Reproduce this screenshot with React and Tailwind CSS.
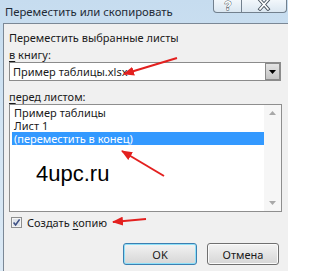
export default function App() {
  const font = { fontFamily: '"Noto Sans", "Open Sans", sans-serif' };
  return (
    <div
      className="relative w-[288px] h-[271px] overflow-hidden flex flex-col bg-gradient-to-b from-[#c6dcef] via-[#d3e5f4] to-[#dbe9f5] text-[#1a1a1a]"
      style={font}
    >
      {/* Title bar */}
      <div className="h-[23px] shrink-0 flex items-start">
        <div className="pl-[5px] pt-[4px] text-[11.3px] leading-[15px] text-[#1e2a36] whitespace-nowrap">
          Переместить или скопировать
        </div>
        <div className="ml-auto mr-[1px] flex h-[13px]">
          <div className="w-[29px] h-full border border-t-0 border-[#72808e] rounded-bl-[4px] bg-gradient-to-b from-[#f2f7fb] to-[#dbe7f1] flex items-start justify-center overflow-hidden">
            <svg width="12" height="12" viewBox="0 0 12 12">
              <text
                x="6"
                y="10"
                textAnchor="middle"
                fontSize="12"
                fontWeight="700"
                fontFamily="Liberation Sans, sans-serif"
                fill="#ffffff"
                stroke="#4a5560"
                strokeWidth="0.9"
                paintOrder="stroke"
              >
                ?
              </text>
            </svg>
          </div>
          <div className="w-[45px] h-full border border-t-0 border-l-0 border-[#72808e] rounded-br-[4px] bg-gradient-to-b from-[#f2f7fb] to-[#dbe7f1] flex items-start justify-center overflow-hidden">
            <svg width="14" height="12" viewBox="0 0 14 12" className="-mt-[1px]">
              <path d="M3 1 L11 10 M11 1 L3 10" stroke="#4a5560" strokeWidth="3.4" strokeLinecap="square" />
              <path d="M3 1 L11 10 M11 1 L3 10" stroke="#ffffff" strokeWidth="1.6" strokeLinecap="square" />
            </svg>
          </div>
        </div>
      </div>

      {/* Client area */}
      <div className="flex-1 ml-[3px] border-l border-t border-[#7b8896] bg-[#f0f0f0] pl-[5px] flex flex-col text-[11px] leading-[15px]">
        <div className="pt-[6px] whitespace-nowrap">Переместить выбранные листы</div>
        <div className="mt-[2px] whitespace-nowrap">
          <u className="underline-offset-2">в</u> книгу:
        </div>

        {/* Combobox */}
        <div className="w-[272px] h-[19px] border border-[#8b8b8b] bg-white flex items-center">
          <div className="flex-1 pl-[3px] whitespace-nowrap">Пример таблицы.xlsx</div>
          <div className="w-[15px] h-[17px] border border-[#8a8a8a] bg-gradient-to-b from-[#e4e4e4] to-[#c4c4c4] flex items-center justify-center">
            <svg width="7" height="4" viewBox="0 0 7 4">
              <path d="M0 0 L7 0 L3.5 4 Z" fill="#000" />
            </svg>
          </div>
        </div>

        <div className="mt-[8px] whitespace-nowrap">
          <u className="underline-offset-2">п</u>еред листом:
        </div>

        {/* Listbox */}
        <div className="relative w-[273px] h-[108px] border border-[#8e8e8e] bg-white flex">
          <div className="flex-1 pt-[1px] pl-[2px] flex flex-col">
            <div className="h-[13px] leading-[13px] pl-[2px] whitespace-nowrap">Пример таблицы</div>
            <div className="h-[13px] leading-[13px] pl-[2px] whitespace-nowrap">Лист 1</div>
            <div className="h-[13px] leading-[13px] pl-[2px] whitespace-nowrap bg-[#3399ff] text-white">
              (переместить в конец)
            </div>
          </div>
          <div className="w-[17px] bg-[#f6f6f6] flex flex-col justify-between items-center py-[6px]">
            <svg width="7" height="4" viewBox="0 0 7 4">
              <path d="M0 4 L7 4 L3.5 0 Z" fill="#a8a8a8" />
            </svg>
            <svg width="7" height="4" viewBox="0 0 7 4">
              <path d="M0 0 L7 0 L3.5 4 Z" fill="#a8a8a8" />
            </svg>
          </div>
          <div
            className="absolute left-[26px] top-[56px] text-[22px] leading-[26px] text-black whitespace-nowrap"
            style={{ fontFamily: '"Liberation Sans", Arial, sans-serif' }}
          >
            4upc.ru
          </div>
        </div>

        {/* Checkbox */}
        <div className="mt-[3px] h-[14px] flex items-center">
          <svg width="11" height="11" viewBox="0 0 11 11" className="ml-[2px]">
            <rect x="0.5" y="0.5" width="10" height="10" fill="#f4f4f4" stroke="#8e8f8f" />
            <rect x="2" y="2" width="7" height="7" fill="#dfe4ea" />
            <path d="M2.6 5.6 L4.6 8 L8.6 2.4" fill="none" stroke="#3d4f83" strokeWidth="1.6" />
          </svg>
          <span className="ml-[5px] whitespace-nowrap">
            Создать <u className="underline-offset-2">к</u>опию
          </span>
        </div>

        {/* Buttons */}
        <div className="mt-[14px] w-[270px] flex justify-end gap-[10px]">
          <div className="w-[74px] h-[22px] rounded-[3px] border border-[#3c7fb1] bg-gradient-to-b from-[#f3f3f3] to-[#d6d6d6] shadow-[inset_0_0_0_1px_#8fe0f8] flex items-center justify-center">
            OK
          </div>
          <div className="w-[72px] h-[22px] rounded-[3px] border border-[#707070] bg-gradient-to-b from-[#f3f3f3] to-[#d6d6d6] shadow-[inset_0_0_0_1px_#fbfbfb] flex items-center justify-center">
            Отмена
          </div>
        </div>
      </div>

      {/* Red annotation arrows */}
      <svg className="absolute inset-0 pointer-events-none" width="288" height="271" viewBox="0 0 288 271">
        <defs>
          <marker id="ah" markerWidth="11" markerHeight="9" refX="10" refY="4.5" orient="auto" markerUnits="userSpaceOnUse">
            <path d="M0 0 L11 4.5 L0 9 Z" fill="#e3201f" />
          </marker>
        </defs>
        <line x1="177" y1="58" x2="124" y2="74" stroke="#e3201f" strokeWidth="2" markerEnd="url(#ah)" />
        <line x1="164" y1="176" x2="122" y2="151" stroke="#e3201f" strokeWidth="2" markerEnd="url(#ah)" />
        <line x1="146" y1="219" x2="113" y2="222" stroke="#e3201f" strokeWidth="2" markerEnd="url(#ah)" />
      </svg>
    </div>
  );
}
